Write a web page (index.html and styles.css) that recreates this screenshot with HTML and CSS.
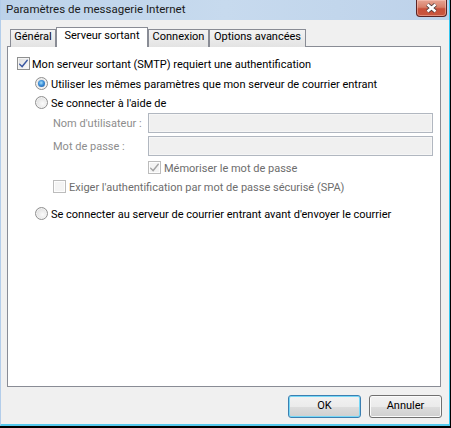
FILE: index.html
```html
<!DOCTYPE html>
<html lang="fr">
<head>
<meta charset="utf-8">
<title>Paramètres de messagerie Internet</title>
<link rel="stylesheet" href="styles.css">
</head>
<body>
<div class="window">
  <div class="titlebar">
    <span class="title">Paramètres de messagerie Internet</span>
    <div class="close">
      <svg width="29" height="16" viewBox="0 0 29 16">
        <path d="M10.5 4.5 L18.5 11.5 M18.5 4.5 L10.5 11.5" stroke="#4a3a3a" stroke-width="4.2" fill="none"/>
        <path d="M10.5 4.5 L18.5 11.5 M18.5 4.5 L10.5 11.5" stroke="#ffffff" stroke-width="2.4" fill="none"/>
      </svg>
    </div>
  </div>
  <div class="content">
    <div class="tabs">
      <div class="tab tab-general">Général</div>
      <div class="tab tab-active">Serveur sortant</div>
      <div class="tab tab-connexion">Connexion</div>
      <div class="tab tab-options">Options avancées</div>
    </div>
    <div class="panel">
      <div class="row row-1">
        <span class="cb checked"><svg width="11" height="11" viewBox="0 0 11 11"><path d="M1.5 5.2 L4 7.6 L9.2 1.2 L10 2.6 L4.2 9.8 L1 6.6 Z" fill="#3a57a0"/></svg></span>
        <span class="label">Mon serveur sortant (SMTP) requiert une authentification</span>
      </div>
      <div class="row row-2">
        <span class="radio selected"></span>
        <span class="label">Utiliser les mêmes paramètres que mon serveur de courrier entrant</span>
      </div>
      <div class="row row-3">
        <span class="radio"></span>
        <span class="label">Se connecter à l'aide de</span>
      </div>
      <div class="field row-4">
        <span class="field-label">Nom d'utilisateur :</span>
        <span class="input"></span>
      </div>
      <div class="field row-5">
        <span class="field-label">Mot de passe :</span>
        <span class="input"></span>
      </div>
      <div class="row row-6">
        <span class="cb checked disabled"><svg width="11" height="11" viewBox="0 0 11 11"><path d="M1.5 5.2 L4 7.6 L9.2 1.2 L10 2.6 L4.2 9.8 L1 6.6 Z" fill="#a3a3a3"/></svg></span>
        <span class="label dim">Mémoriser le mot de passe</span>
      </div>
      <div class="row row-7">
        <span class="cb disabled"></span>
        <span class="label dim">Exiger l'authentification par mot de passe sécurisé (SPA)</span>
      </div>
      <div class="row row-8">
        <span class="radio"></span>
        <span class="label">Se connecter au serveur de courrier entrant avant d'envoyer le courrier</span>
      </div>
    </div>
    <div class="buttons">
      <div class="btn btn-default">OK</div>
      <div class="btn">Annuler</div>
    </div>
  </div>
</div>
</body>
</html>
```

FILE: styles.css
```css
* { box-sizing: border-box; margin: 0; padding: 0; }
html { background: #000; }
body {
  margin: 0;
  width: 451px;
  height: 428px;
  overflow: hidden;
  font-family: Roboto, "Noto Sans", sans-serif;
  font-size: 11px;
  color: #000;
}
.window {
  width: 450px;
  height: 426px;
  background: #f0f0f0;
  border-left: 1px solid #b3cdea;
  border-right: 1px solid #33c6f0;
  border-bottom: 2px solid #55caee;
  display: flex;
  flex-direction: column;
}
.titlebar {
  height: 20px;
  flex: none;
  display: flex;
  justify-content: space-between;
  align-items: flex-start;
  padding: 0 2px 0 5px;
  background: linear-gradient(to right, #bcd2ea 0%, #c7daee 50%, #bdd2ea 100%);
}
.title {
  font-size: 11.5px;
  line-height: 18px;
  color: #1a1a1a;
}
.close {
  width: 31px;
  height: 17px;
  border: 1px solid #5b2424;
  border-top: 0;
  border-radius: 0 0 4px 4px;
  background: linear-gradient(to bottom, #e7a493 0%, #d8806a 45%, #c8503a 55%, #c9573f 100%);
  box-shadow: inset 0 0 0 1px rgba(255, 210, 200, 0.45);
}
.close svg { display: block; }
.content {
  flex: 1;
  display: flex;
  flex-direction: column;
}
.tabs {
  display: flex;
  height: 20px;
  margin: 7px 0 -1px 9px;
  align-items: flex-end;
  position: relative;
  z-index: 1;
}
.tab {
  height: 18px;
  border: 1px solid #898c95;
  border-bottom: 0;
  background: linear-gradient(to bottom, #f3f3f3 0%, #ebebeb 50%, #e3e3e3 100%);
  text-align: center;
  line-height: 14px;
  white-space: nowrap;
}
.tab-general { width: 46px; }
.tab-connexion { width: 61px; }
.tab-options { width: 97px; }
.tab-active {
  width: 92px;
  height: 20px;
  background: #fff;
  line-height: 16px;
}
.panel {
  margin-left: 6px;
  width: 434px;
  height: 341px;
  border: 1px solid #898c95;
  background: #fff;
}
.row {
  display: flex;
  align-items: center;
  height: 13px;
  line-height: 13px;
  white-space: nowrap;
}
.label { margin-left: 3px; padding-top: 1px; }
.dim { color: #6d6d6d; }
.row-1 { margin: 10px 0 0 9px; }
.row-1 .label { margin-left: 2px; }
.row-2 { margin: 7px 0 0 27px; }
.row-3 { margin: 6px 0 0 27px; }
.row-4 { margin: 4px 0 0 45px; }
.row-5 { margin: 3px 0 0 45px; }
.row-6 { margin: 5px 0 0 140px; }
.row-7 { margin: 6px 0 0 45px; }
.row-8 { margin: 14px 0 0 27px; }
.field {
  display: flex;
  align-items: center;
  height: 20px;
  line-height: 13px;
}
.field-label {
  width: 95px;
  color: #8d8d8d;
  white-space: nowrap;
}
.input {
  width: 285px;
  height: 20px;
  border: 1px solid #b1b7c0;
  background: #f0f0f0;
  box-shadow: inset 0 0 0 1px #f6f6f6;
}
.cb {
  width: 13px;
  height: 13px;
  flex: none;
  border: 1px solid #8e8f8f;
  background: linear-gradient(135deg, #dcdcdc 0%, #f0f0f0 60%, #fbfbfb 100%);
  box-shadow: inset 0 0 0 1px #f4f4f4;
  display: flex;
  align-items: center;
  justify-content: center;
}
.cb svg { display: block; }
.cb.disabled {
  border-color: #bcbcbc;
  background: #f4f4f4;
  box-shadow: inset 0 0 0 1px #fdfdfd;
}
.radio {
  width: 13px;
  height: 13px;
  flex: none;
  border-radius: 50%;
  border: 1px solid #8f8f8f;
  background: radial-gradient(circle at 60% 60%, #fbfbfb 0%, #e6e6e6 55%, #cfcfcf 100%);
  box-shadow: inset 0 0 0 1px #f3f3f3;
  position: relative;
}
.radio.selected::after {
  content: "";
  position: absolute;
  left: 2px;
  top: 2px;
  width: 7px;
  height: 7px;
  border-radius: 50%;
  background: radial-gradient(circle at 45% 40%, #a6e1fb 0%, #3c8ed8 45%, #1b4f95 100%);
}
.buttons {
  display: flex;
  justify-content: flex-end;
  gap: 8px;
  margin-top: 8px;
  padding-right: 7px;
}
.btn {
  width: 73px;
  height: 23px;
  border: 1px solid #707070;
  border-radius: 3px;
  background: linear-gradient(to bottom, #f2f2f2 0%, #ebebeb 50%, #dddddd 50%, #cfcfcf 100%);
  box-shadow: inset 0 0 0 1px #fbfbfb;
  text-align: center;
  line-height: 20px;
}
.btn-default {
  border-color: #3c7fb1;
  box-shadow: inset 0 0 0 1px #77d8f7;
}
```
